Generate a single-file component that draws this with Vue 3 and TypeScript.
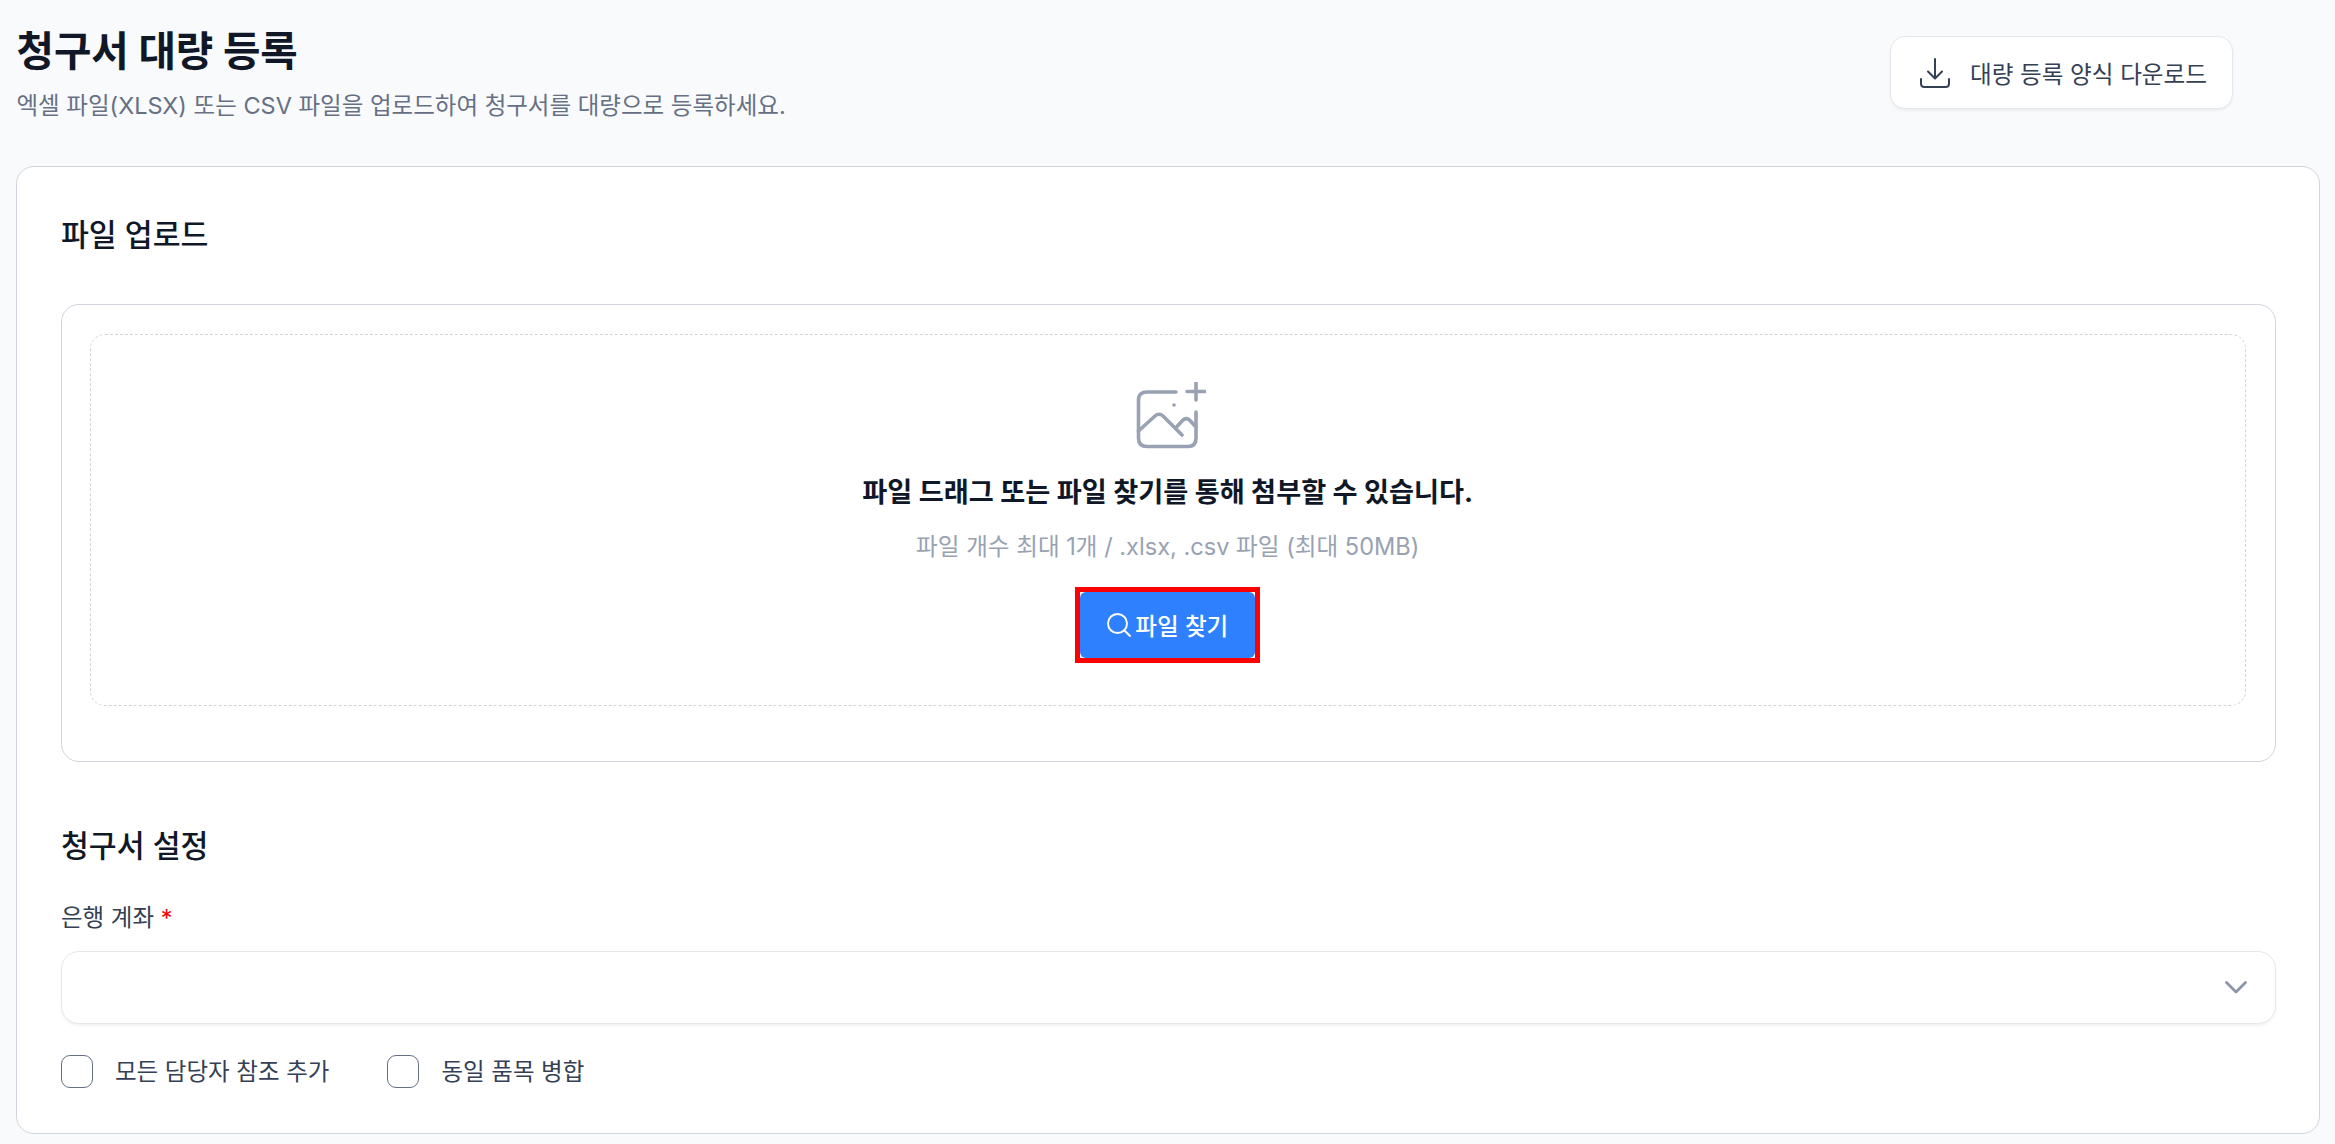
<script setup lang="ts">
const heading: string = '청구서 대량 등록'
</script>

<template>
  <main class="page">
    <header class="head">
      <div class="head-text">
        <h1 class="title">{{ heading }}</h1>
        <p class="subtitle">엑셀 파일(XLSX) 또는 CSV 파일을 업로드하여 청구서를 대량으로 등록하세요.</p>
      </div>
      <button class="download" type="button">
        <svg class="download-icon" viewBox="0 0 30 30" fill="none" stroke="#344054" stroke-width="2" stroke-linecap="round" stroke-linejoin="round">
          <path d="M15 1V20M8 13.500L15 20.500L22 13.500" />
          <path d="M1 21V25.500Q1 29 4.500 29H25.500Q29 29 29 25.500V21" />
        </svg>
        <span>대량 등록 양식 다운로드</span>
      </button>
    </header>

    <section class="card">
      <h2 class="section-title">파일 업로드</h2>
      <div class="upload-box">
        <div class="dropzone">
          <svg class="image-icon" viewBox="0 0 70 68" fill="none" stroke="#98a2b3" stroke-width="3.600" stroke-linecap="round" stroke-linejoin="round">
            <path d="M40 10H11Q2.500 10 2.500 18V56Q2.500 64.500 11 64.500H52Q60 64.500 60 56V30" />
            <path d="M51 9.500H69M60 1V18" />
            <circle cx="38" cy="23" r="1.800" fill="#98a2b3" stroke="none" />
            <path d="M2.500 49L19 34Q23 30.500 27 34L46 53" />
            <path d="M41 44.500L46 39Q50 34.500 54 38.500L60 45" />
          </svg>
          <p class="drop-title">파일 드래그 또는 파일 찾기를 통해 첨부할 수 있습니다.</p>
          <p class="drop-hint">파일 개수 최대 1개 / .xlsx, .csv 파일 (최대 50MB)</p>
          <span class="highlight">
            <button class="find" type="button">
              <svg class="search-icon" viewBox="0 0 24 24" fill="none" stroke="#ffffff" stroke-width="1.900" stroke-linecap="round">
                <circle cx="10.500" cy="10.500" r="9.500" />
                <path d="M17.500 17.500L23 23" />
              </svg>
              <span>파일 찾기</span>
            </button>
          </span>
        </div>
      </div>

      <h2 class="section-title settings-title">청구서 설정</h2>
      <label class="field-label">은행 계좌 <span class="required">*</span></label>
      <div class="select">
        <svg class="chevron" viewBox="0 0 22 13" fill="none" stroke="#8b95a7" stroke-width="2.800" stroke-linecap="round" stroke-linejoin="round">
          <path d="M1.500 1.500L11 11L20.500 1.500" />
        </svg>
      </div>
      <div class="checks">
        <label class="check"><span class="box"></span><span>모든 담당자 참조 추가</span></label>
        <label class="check"><span class="box"></span><span>동일 품목 병합</span></label>
      </div>
    </section>
  </main>
</template>

<style scoped>
.page {
  box-sizing: border-box;
  width: 2335px;
  height: 1144px;
  overflow: hidden;
  padding: 0 15px 0 16px;
  background: #f9fafb;
  font-family: Inter, "Noto Sans CJK KR", sans-serif;
  color: #101828;
}
.head {
  display: flex;
  justify-content: space-between;
  align-items: flex-start;
  height: 166px;
  padding: 0 87px 0 0.500px;
  box-sizing: border-box;
}
.title {
  margin: 24px 0 0;
  font-size: 40.700px;
  line-height: 56px;
  font-weight: 700;
  color: #101828;
}
.subtitle {
  margin: 10px 0 0;
  font-size: 23.500px;
  line-height: 32px;
  font-weight: 400;
  color: #667085;
}
.download {
  display: flex;
  align-items: center;
  gap: 20px;
  box-sizing: border-box;
  width: 343px;
  height: 73px;
  margin-top: 36px;
  padding: 0 0 0 29px;
  border: 1.500px solid #e4e7ec;
  border-radius: 15px;
  background: #ffffff;
  box-shadow: 0 2px 3px rgba(16, 24, 40, 0.05);
  font: inherit;
  font-size: 23.600px;
  font-weight: 400;
  color: #344054;
}
.download-icon {
  width: 30px;
  height: 30px;
  flex: none;
}
.card {
  box-sizing: border-box;
  height: 968px;
  padding: 46.500px 43.500px 0 44px;
  border: 1.500px solid #d0d5dd;
  border-radius: 18px;
  background: #ffffff;
}
.section-title {
  margin: 0;
  font-size: 30.300px;
  line-height: 42px;
  font-weight: 500;
  color: #101828;
}
.upload-box {
  box-sizing: border-box;
  height: 458px;
  margin-top: 48px;
  padding: 29.500px 29px 26px 28px;
  border: 1.500px solid #d0d5dd;
  border-radius: 18px;
}
.dropzone {
  display: flex;
  flex-direction: column;
  align-items: center;
  box-sizing: border-box;
  height: 371.500px;
  padding-top: 46.500px;
  border: 1.500px dashed #d0d5dd;
  border-radius: 15px;
}
.image-icon {
  width: 70px;
  height: 68px;
  margin-left: 7px;
  flex: none;
}
.drop-title {
  margin: 24px 0 0;
  font-size: 27.200px;
  line-height: 38px;
  font-weight: 700;
  color: #101828;
}
.drop-hint {
  margin: 17.500px 0 0;
  font-size: 23.600px;
  line-height: 36px;
  font-weight: 400;
  color: #98a2b3;
}
.highlight {
  display: block;
  margin-top: 21.500px;
  border: 5px solid #ff0000;
  background: #ffffff;
}
.find {
  display: flex;
  align-items: center;
  justify-content: center;
  gap: 4px;
  box-sizing: border-box;
  width: 175px;
  height: 66px;
  padding: 0;
  border: 0;
  border-radius: 6px;
  background: #2e80ff;
  font: inherit;
  font-size: 23.600px;
  font-weight: 500;
  color: #ffffff;
}
.search-icon {
  width: 24px;
  height: 24px;
  flex: none;
}
.settings-title {
  margin-top: 63px;
}
.field-label {
  display: block;
  margin-top: 35px;
  font-size: 23.500px;
  line-height: 32px;
  font-weight: 400;
  color: #344054;
}
.required {
  color: #f00000;
}
.select {
  position: relative;
  box-sizing: border-box;
  height: 73px;
  margin-top: 17px;
  border: 1.500px solid #e4e7ec;
  border-radius: 18px;
  background: #ffffff;
  box-shadow: 0 2px 3px rgba(16, 24, 40, 0.05);
}
.chevron {
  position: absolute;
  top: 29px;
  right: 27.500px;
  width: 22px;
  height: 13px;
}
.checks {
  display: flex;
  gap: 58px;
  margin-top: 31px;
}
.check {
  display: flex;
  align-items: center;
  gap: 22px;
  font-size: 23.500px;
  line-height: 33px;
  font-weight: 400;
  color: #344054;
}
.box {
  box-sizing: border-box;
  width: 32px;
  height: 33px;
  border: 1.500px solid #667085;
  border-radius: 9px;
  background: #ffffff;
}
</style>

<style>
html,
body {
  background: #f9fafb;
}
</style>
